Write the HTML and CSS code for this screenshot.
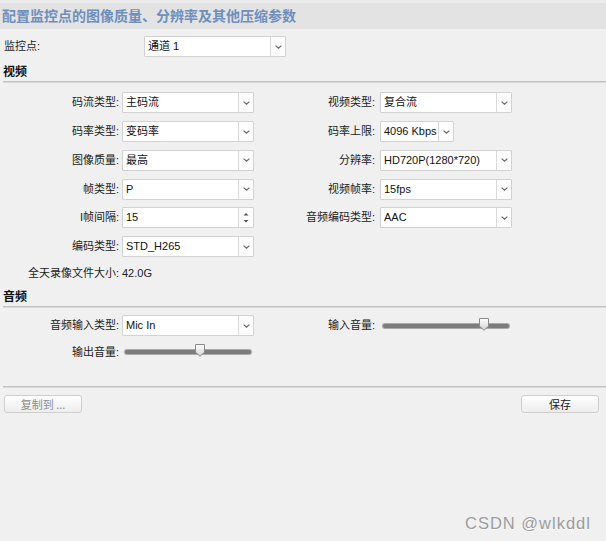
FILE: index.html
```html
<!DOCTYPE html>
<html lang="zh-CN">
<head>
<meta charset="utf-8">
<title>配置</title>
<link rel="stylesheet" href="styles.css">
</head>
<body>
<div class="page">
  <div class="header">配置监控点的图像质量、分辨率及其他压缩参数</div>

  <div class="channel">
    <span class="label-left">监控点:</span>
    <div class="select"><span class="val">通道 1</span><span class="arrow"><svg width="7" height="4" viewBox="0 0 7 4"><path d="M0.6 0.6 L3.5 3.2 L6.4 0.6" fill="none" stroke="#6a6a6a" stroke-width="1.2"/></svg></span></div>
  </div>

  <div class="section-title">视频</div>
  <div class="divider"></div>

  <div class="cols video">
    <div class="grid left video-left">
      <span class="label">码流类型:</span>
      <div class="select"><span class="val">主码流</span><span class="arrow"><svg width="7" height="4" viewBox="0 0 7 4"><path d="M0.6 0.6 L3.5 3.2 L6.4 0.6" fill="none" stroke="#6a6a6a" stroke-width="1.2"/></svg></span></div>
      <span class="label">码率类型:</span>
      <div class="select"><span class="val">变码率</span><span class="arrow"><svg width="7" height="4" viewBox="0 0 7 4"><path d="M0.6 0.6 L3.5 3.2 L6.4 0.6" fill="none" stroke="#6a6a6a" stroke-width="1.2"/></svg></span></div>
      <span class="label">图像质量:</span>
      <div class="select"><span class="val">最高</span><span class="arrow"><svg width="7" height="4" viewBox="0 0 7 4"><path d="M0.6 0.6 L3.5 3.2 L6.4 0.6" fill="none" stroke="#6a6a6a" stroke-width="1.2"/></svg></span></div>
      <span class="label">帧类型:</span>
      <div class="select"><span class="val">P</span><span class="arrow"><svg width="7" height="4" viewBox="0 0 7 4"><path d="M0.6 0.6 L3.5 3.2 L6.4 0.6" fill="none" stroke="#6a6a6a" stroke-width="1.2"/></svg></span></div>
      <span class="label">I帧间隔:</span>
      <div class="select"><span class="val">15</span><span class="arrow spin"><svg width="6" height="13" viewBox="0 0 6 13"><path d="M3 2 L5.5 4.6 H0.5 Z" fill="#555"/><path d="M3 11.5 L5.5 8.9 H0.5 Z" fill="#555"/></svg></span></div>
      <span class="label">编码类型:</span>
      <div class="select"><span class="val">STD_H265</span><span class="arrow"><svg width="7" height="4" viewBox="0 0 7 4"><path d="M0.6 0.6 L3.5 3.2 L6.4 0.6" fill="none" stroke="#6a6a6a" stroke-width="1.2"/></svg></span></div>
      <span class="label text-row">全天录像文件大小:</span>
      <span class="value text-row">42.0G</span>
    </div>
    <div class="grid right">
      <span class="label">视频类型:</span>
      <div class="select"><span class="val">复合流</span><span class="arrow"><svg width="7" height="4" viewBox="0 0 7 4"><path d="M0.6 0.6 L3.5 3.2 L6.4 0.6" fill="none" stroke="#6a6a6a" stroke-width="1.2"/></svg></span></div>
      <span class="label">码率上限:</span>
      <div class="select short"><span class="val">4096 Kbps</span><span class="arrow"><svg width="7" height="4" viewBox="0 0 7 4"><path d="M0.6 0.6 L3.5 3.2 L6.4 0.6" fill="none" stroke="#6a6a6a" stroke-width="1.2"/></svg></span></div>
      <span class="label">分辨率:</span>
      <div class="select"><span class="val">HD720P(1280*720)</span><span class="arrow"><svg width="7" height="4" viewBox="0 0 7 4"><path d="M0.6 0.6 L3.5 3.2 L6.4 0.6" fill="none" stroke="#6a6a6a" stroke-width="1.2"/></svg></span></div>
      <span class="label">视频帧率:</span>
      <div class="select"><span class="val">15fps</span><span class="arrow"><svg width="7" height="4" viewBox="0 0 7 4"><path d="M0.6 0.6 L3.5 3.2 L6.4 0.6" fill="none" stroke="#6a6a6a" stroke-width="1.2"/></svg></span></div>
      <span class="label">音频编码类型:</span>
      <div class="select"><span class="val">AAC</span><span class="arrow"><svg width="7" height="4" viewBox="0 0 7 4"><path d="M0.6 0.6 L3.5 3.2 L6.4 0.6" fill="none" stroke="#6a6a6a" stroke-width="1.2"/></svg></span></div>
    </div>
  </div>

  <div class="section-title audio-title">音频</div>
  <div class="divider"></div>

  <div class="cols audio">
    <div class="grid left audio-grid">
      <span class="label">音频输入类型:</span>
      <div class="select"><span class="val">Mic In</span><span class="arrow"><svg width="7" height="4" viewBox="0 0 7 4"><path d="M0.6 0.6 L3.5 3.2 L6.4 0.6" fill="none" stroke="#6a6a6a" stroke-width="1.2"/></svg></span></div>
      <span class="label">输出音量:</span>
      <div class="slider"><div class="track"><span class="thumb" style="left:59.5%"><svg width="11" height="13" viewBox="0 0 11 13"><defs><linearGradient id="tg1" x1="0" y1="0" x2="0" y2="1"><stop offset="0" stop-color="#ffffff"/><stop offset="1" stop-color="#d2d2d2"/></linearGradient></defs><path d="M1 0.5 H10 V8.2 L5.5 12.3 L1 8.2 Z" fill="url(#tg1)" stroke="#8a8a8a" stroke-width="1"/></svg></span></div></div>
    </div>
    <div class="grid right audio-grid">
      <span class="label">输入音量:</span>
      <div class="slider"><div class="track"><span class="thumb" style="left:80%"><svg width="11" height="13" viewBox="0 0 11 13"><defs><linearGradient id="tg2" x1="0" y1="0" x2="0" y2="1"><stop offset="0" stop-color="#ffffff"/><stop offset="1" stop-color="#d2d2d2"/></linearGradient></defs><path d="M1 0.5 H10 V8.2 L5.5 12.3 L1 8.2 Z" fill="url(#tg2)" stroke="#8a8a8a" stroke-width="1"/></svg></span></div></div>
    </div>
  </div>

  <div class="divider bottom-divider"></div>

  <div class="buttons">
    <button class="btn disabled" type="button">复制到 ...</button>
    <button class="btn" type="button">保存</button>
  </div>

  <div class="watermark">CSDN @wlkddl</div>
</div>
</body>
</html>
```
FILE: styles.css
```css
* { box-sizing: border-box; }

html, body {
  margin: 0;
  padding: 0;
  background: #f0f0f0;
}

body {
  font-family: "Liberation Sans", "Noto Sans CJK SC", sans-serif;
  font-size: 11px;
  color: #1e1e1e;
}

.page {
  position: relative;
  width: 606px;
  height: 541px;
  padding-top: 3px;
  background: linear-gradient(#ebebeb 0, #ebebeb 3px, #f0f0f0 3px);
}

.header {
  height: 26px;
  line-height: 24px;
  padding-left: 2px;
  background: #e3e3e3;
  color: #6e8fbd;
  font-family: "Noto Sans CJK SC", sans-serif;
  font-size: 14px;
  font-weight: 700;
  white-space: nowrap;
  overflow: hidden;
}

.channel {
  display: grid;
  grid-template-columns: 144px 142px;
  align-items: center;
  margin-top: 7px;
  height: 21px;
}

.label-left {
  padding-left: 4px;
  line-height: 21px;
}

.section-title {
  margin-top: 7px;
  padding-left: 3px;
  height: 14px;
  line-height: 14px;
  font-family: "Noto Sans CJK SC", sans-serif;
  font-size: 12px;
  font-weight: 700;
  color: #111;
}

.audio-title { margin-top: 8px; }

.divider {
  margin: 3px 0 0 3px;
  height: 2px;
  border-top: 1px solid #c2c2c2;
  border-bottom: 1px solid #d9d9d9;
}

.cols {
  display: flex;
  align-items: flex-start;
}

.video { margin-top: 9.3px; }
.audio { margin-top: 7.3px; }

.grid {
  display: grid;
  grid-auto-rows: 21px;
  row-gap: 7.75px;
  align-items: center;
}

.grid.video-left {
  grid-template-rows: repeat(6, 21px) 16px;
}

.grid.left {
  width: 262px;
  grid-template-columns: 119px 132px;
  column-gap: 3px;
}

.grid.right {
  grid-template-columns: 113px 132px;
  column-gap: 5px;
}

.audio-grid { row-gap: 5.7px; }

.label {
  text-align: right;
  white-space: nowrap;
  line-height: 21px;
  color: #222;
}

.value {
  color: #222;
}

.text-row {
  height: 16px;
  line-height: 16px;
}

.select {
  display: flex;
  height: 21px;
  background: #fff;
  border: 1px solid #d2d2d2;
  border-radius: 1px;
}

.select.short {
  width: 74px;
}

.select .val {
  flex: 1;
  min-width: 0;
  padding-left: 3px;
  line-height: 19px;
  color: #111;
  white-space: nowrap;
  overflow: hidden;
}

.select .arrow {
  width: 15px;
  flex: none;
  display: flex;
  align-items: center;
  justify-content: center;
  border-left: 1px solid #dadada;
  background: #fcfcfc;
}

.slider {
  height: 21px;
  padding: 0 3px;
  display: flex;
  align-items: center;
}

.track {
  position: relative;
  flex: 1;
  height: 4px;
  border-radius: 2px;
  background: #7c7c7c;
  box-shadow: 0 0 0 1px #a9a9a9;
}

.thumb {
  position: absolute;
  top: -6px;
  width: 11px;
  height: 13px;
  transform: translateX(-50%);
  display: block;
}

.thumb svg { display: block; }

.bottom-divider { margin-top: 23px; }

.buttons {
  display: flex;
  justify-content: space-between;
  margin-top: 7px;
  padding: 0 7px 0 4px;
}

.btn {
  width: 78px;
  height: 18px;
  padding: 0;
  border: 1px solid #cfcfcf;
  border-radius: 3px;
  background: linear-gradient(#fefefe, #ededed);
  font-family: "Noto Sans CJK SC", sans-serif;
  font-size: 11px;
  line-height: 16px;
  color: #1a1a1a;
}

.btn.disabled {
  color: #8c8c8c;
}

.watermark {
  position: absolute;
  left: 465px;
  top: 514px;
  font-family: "Liberation Sans", sans-serif;
  font-size: 16.5px;
  letter-spacing: 1px;
  color: #9c9c9c;
  text-shadow: 0 1px 0 #fafafa;
  white-space: nowrap;
}
```
